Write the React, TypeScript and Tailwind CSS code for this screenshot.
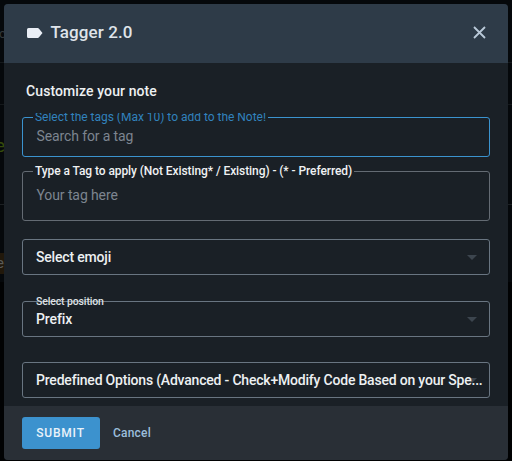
import type { ReactNode } from "react";

function Field({ label, labelClass, className, children }: { label?: string; labelClass?: string; className: string; children: ReactNode }) {
  return (
    <div className={`relative flex shrink-0 items-center rounded-[3px] border px-[13px] ${className}`}>
      {label && (
        <span className={`absolute whitespace-nowrap ${labelClass}`}>
          <span className="block">{label}</span>
        </span>
      )}
      {children}
    </div>
  );
}

function Arrow({ className }: { className: string }) {
  return (
    <svg className={`h-[5px] w-[10px] ${className}`} viewBox="0 0 10 5">
      <path d="M0 0h10L5 5z" fill="#3c454e" />
    </svg>
  );
}

export default function App() {
  return (
    <div className="relative h-[461px] w-[512px] overflow-hidden bg-[#05080b] px-1 pt-1 font-[Roboto,sans-serif]">
      <div className="absolute top-[62px] left-0 h-px w-full bg-[#14181b]" />
      <div className="absolute top-[104px] left-0 h-px w-full bg-[#14181b]" />
      <div className="absolute top-[204px] left-0 h-px w-full bg-[#1c2023]" />
      <div className="absolute top-[282px] left-0 h-[179px] w-full bg-[#010203]" />
      <span className="absolute top-[26px] left-[-1px] text-[13px] leading-4 text-[#33383c]">c</span>
      <span className="absolute top-[134px] left-[-5px] text-[19px] leading-6 text-[#354b0b]">e</span>
      <span className="absolute top-[253px] left-[-4px] h-[21px] w-2 bg-[#21180b] text-[15px] leading-[21px] text-[#5a5b59]">e</span>

      <div className="relative flex h-[456px] w-[504px] flex-col overflow-hidden rounded-[4px] bg-[#1a2026]">
        <header className="flex h-[59px] shrink-0 items-center bg-[#2e3b48] pr-[22px] pl-[23px]">
          <svg className="mt-[-1px] h-[10px] w-[16px]" viewBox="0 0 16 10">
            <path d="M1.5 0h9.2q.8 0 1.3.7L15.5 5 12 9.3q-.5.7-1.3.7H1.5Q0 10 0 8.5v-7Q0 0 1.5 0z" fill="#e9eef5" />
          </svg>
          <h1 className="mt-[-3px] ml-[7.5px] text-[17px] leading-5 font-medium tracking-[0.1px] text-[#dfe4ea]">Tagger 2.0</h1>
          <svg className="mt-[-3px] ml-auto size-[13px]" viewBox="0 0 13 13">
            <path d="M1 1l11 11M12 1L1 12" stroke="#bac9d9" strokeWidth="1.8" fill="none" />
          </svg>
        </header>

        <main className="flex h-[343px] shrink-0 flex-col px-[18px] pt-[18px]">
          <h2 className="h-[36px] shrink-0 pl-[4px] text-[14px] leading-5 font-medium tracking-[0.1px] text-[#edf0f2]">Customize your note</h2>
          <Field
            label="Select the tags (Max 10) to add to the Note!"
            labelClass="top-[-5px] left-[10px] h-[12px] overflow-hidden bg-[#1a2026] px-[2px] text-[12px] leading-[14px] tracking-[-0.02px] text-[#3182bd] *:mt-[-3px]"
            className="h-[40px] border-[#3b93cf]"
          >
            <span className="mt-[-2px] ml-[0.5px] text-[14px] tracking-[-0.12px] text-[#7d8590]">Search for a tag</span>
          </Field>
          <Field
            label="Type a Tag to apply (Not Existing* / Existing) - (* - Preferred)"
            labelClass="top-[-9px] left-[10px] bg-[#1a2026] px-[2px] text-[12px] leading-[16px] font-medium tracking-[-0.08px] text-[#eff1f3]"
            className="mt-[14px] h-[50px] border-[#646b73]"
          >
            <span className="mt-[-2px] ml-[0.5px] text-[14px] tracking-[-0.1px] text-[#7d8590]">Your tag here</span>
          </Field>
          <Field className="mt-[18px] h-[36px] border-[#697581]">
            <span className="text-[14px] font-medium tracking-[-0.18px] text-[#edf0f2]">Select emoji</span>
            <Arrow className="mt-px mr-[-1px] ml-auto" />
          </Field>
          <Field
            label="Select position"
            labelClass="top-[-7px] left-[13px] text-[10.5px] leading-[14px] font-medium tracking-[-0.13px] text-[#dfe2e5]"
            className="mt-[26px] h-[36px] border-[#697581]"
          >
            <span className="text-[14px] font-medium tracking-[-0.1px] text-[#edf0f2]">Prefix</span>
            <Arrow className="mt-px mr-[-1px] ml-auto" />
          </Field>
          <Field className="mt-[25px] h-[36px] border-[#697581]">
            <Arrow className="absolute top-[15px] right-[12px]" />
            <span className="relative whitespace-nowrap text-[14px] font-medium tracking-[-0.2px] text-[#edf0f2]">Predefined Options (Advanced - Check+Modify Code Based on your Spe...</span>
          </Field>
        </main>

        <footer className="flex h-[54px] shrink-0 items-center bg-[#292f36] px-[18px]">
          <button className="h-[32px] w-[78px] rounded-[3px] bg-[#3c92ce] pr-px text-[12px] font-medium tracking-[0.8px] text-[#eaf3fa]">SUBMIT</button>
          <button className="ml-[13px] text-[12px] font-medium tracking-[0.2px] text-[#9bbedc]">Cancel</button>
        </footer>
      </div>
    </div>
  );
}
